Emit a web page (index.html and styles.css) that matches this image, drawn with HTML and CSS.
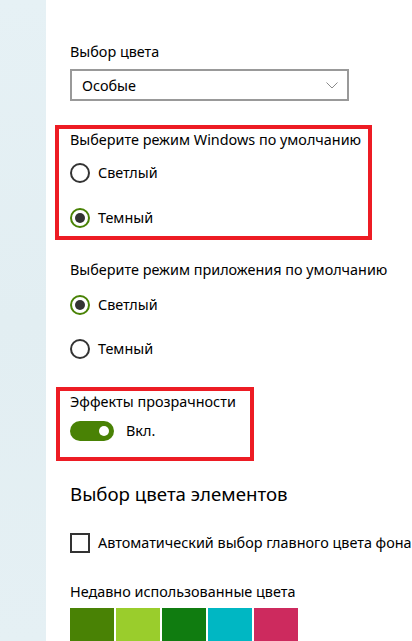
FILE: index.html
```html
<!DOCTYPE html>
<html lang="ru">
<head>
<meta charset="utf-8">
<title>Цвета</title>
<link rel="stylesheet" href="styles.css">
</head>
<body>
<div class="page">
  <div class="sidebar"></div>
  <main class="content">
    <div class="label first">Выбор цвета</div>
    <div class="select">
      <span>Особые</span>
      <svg class="chev" width="12" height="7" viewBox="0 0 12 7"><polyline points="0.5,0.5 6,6 11.5,0.5" fill="none" stroke="#8a8a8a" stroke-width="1"/></svg>
    </div>

    <div class="mark mark-wide">
      <div class="label">Выберите режим Windows по умолчанию</div>
      <div class="radio r1"><span class="circle"></span><span>Светлый</span></div>
      <div class="radio r2"><span class="circle on"></span><span>Темный</span></div>
    </div>

    <div class="label label2">Выберите режим приложения по умолчанию</div>
    <div class="radio r3"><span class="circle on"></span><span>Светлый</span></div>
    <div class="radio r4"><span class="circle"></span><span>Темный</span></div>

    <div class="mark mark-narrow">
      <div class="label">Эффекты прозрачности</div>
      <div class="toggle-row"><span class="toggle"><span class="thumb"></span></span><span>Вкл.</span></div>
    </div>

    <h2 class="heading">Выбор цвета элементов</h2>
    <div class="check-row"><span class="box"></span><span>Автоматический выбор главного цвета фона</span></div>
    <div class="label recent">Недавно использованные цвета</div>
    <div class="swatches">
      <span class="sw" style="background:#498205"></span>
      <span class="sw" style="background:#9acd2c"></span>
      <span class="sw" style="background:#107c10"></span>
      <span class="sw" style="background:#00b7c3"></span>
      <span class="sw" style="background:#cd2a5e"></span>
    </div>
  </main>
</div>
</body>
</html>
```
FILE: styles.css
```css
html, body {
  margin: 0;
  padding: 0;
  background: #ffffff;
}
body {
  font-family: "Noto Sans", "Open Sans", sans-serif;
  font-size: 14.4px;
  color: #000000;
}
.page {
  display: flex;
  height: 641px;
  overflow: hidden;
}
.sidebar {
  width: 46px;
  flex: none;
  background: linear-gradient(180deg, #e6f1f5 0%, #e2eef2 50%, #e5f0f4 100%);
}
.content {
  flex: 1;
  padding-left: 24px;
  white-space: nowrap;
}
.label {
  line-height: 20px;
  height: 20px;
}
.first {
  margin-top: 42px;
}
.select {
  margin-top: 7px;
  width: 279px;
  height: 32px;
  box-sizing: border-box;
  border: 2px solid #999999;
  display: flex;
  align-items: center;
  justify-content: space-between;
  padding: 0 9px 0 10px;
}
.chev {
  display: block;
}
.mark {
  border: 4px solid #ed1c24;
  margin-left: -15px;
  padding-left: 11px;
}
.mark-wide {
  margin-top: 24px;
  width: 298px;
  padding-top: 1px;
  padding-bottom: 8px;
}
.mark-narrow {
  margin-left: -14px;
  padding-left: 10px;
  margin-top: 28px;
  width: 180px;
  padding-top: 1px;
  padding-bottom: 16px;
}
.radio {
  display: flex;
  align-items: center;
  gap: 8px;
  height: 20px;
  line-height: 20px;
}
.r1 { margin-top: 13px; }
.r2 { margin-top: 25px; }
.label2 { margin-top: 20px; }
.r3 { margin-top: 15px; }
.r4 { margin-top: 24px; }
.circle {
  width: 20px;
  height: 20px;
  box-sizing: border-box;
  border: 2px solid #333333;
  border-radius: 50%;
  flex: none;
  display: flex;
  align-items: center;
  justify-content: center;
}
.circle.on {
  border-color: #498205;
}
.circle.on::after {
  content: "";
  width: 10px;
  height: 10px;
  border-radius: 50%;
  background: #333333;
}
.toggle-row {
  margin-top: 9px;
  display: flex;
  align-items: center;
  gap: 12px;
  height: 20px;
  line-height: 20px;
}
.toggle {
  width: 44px;
  height: 20px;
  border-radius: 10px;
  background: #498205;
  display: flex;
  align-items: center;
  justify-content: flex-end;
  padding-right: 5px;
  box-sizing: border-box;
}
.thumb {
  width: 10px;
  height: 10px;
  border-radius: 50%;
  background: #ffffff;
}
.heading {
  margin: 19px 0 0;
  font-size: 18.7px;
  font-weight: normal;
  line-height: 28px;
}
.check-row {
  margin-top: 25px;
  display: flex;
  align-items: center;
  gap: 8px;
  height: 20px;
  line-height: 20px;
}
.box {
  width: 20px;
  height: 20px;
  box-sizing: border-box;
  border: 2px solid #333333;
  flex: none;
}
.recent {
  margin-top: 29px;
}
.swatches {
  margin-top: 6px;
  display: flex;
  gap: 2px;
}
.sw {
  width: 44px;
  height: 44px;
  flex: none;
}
```
